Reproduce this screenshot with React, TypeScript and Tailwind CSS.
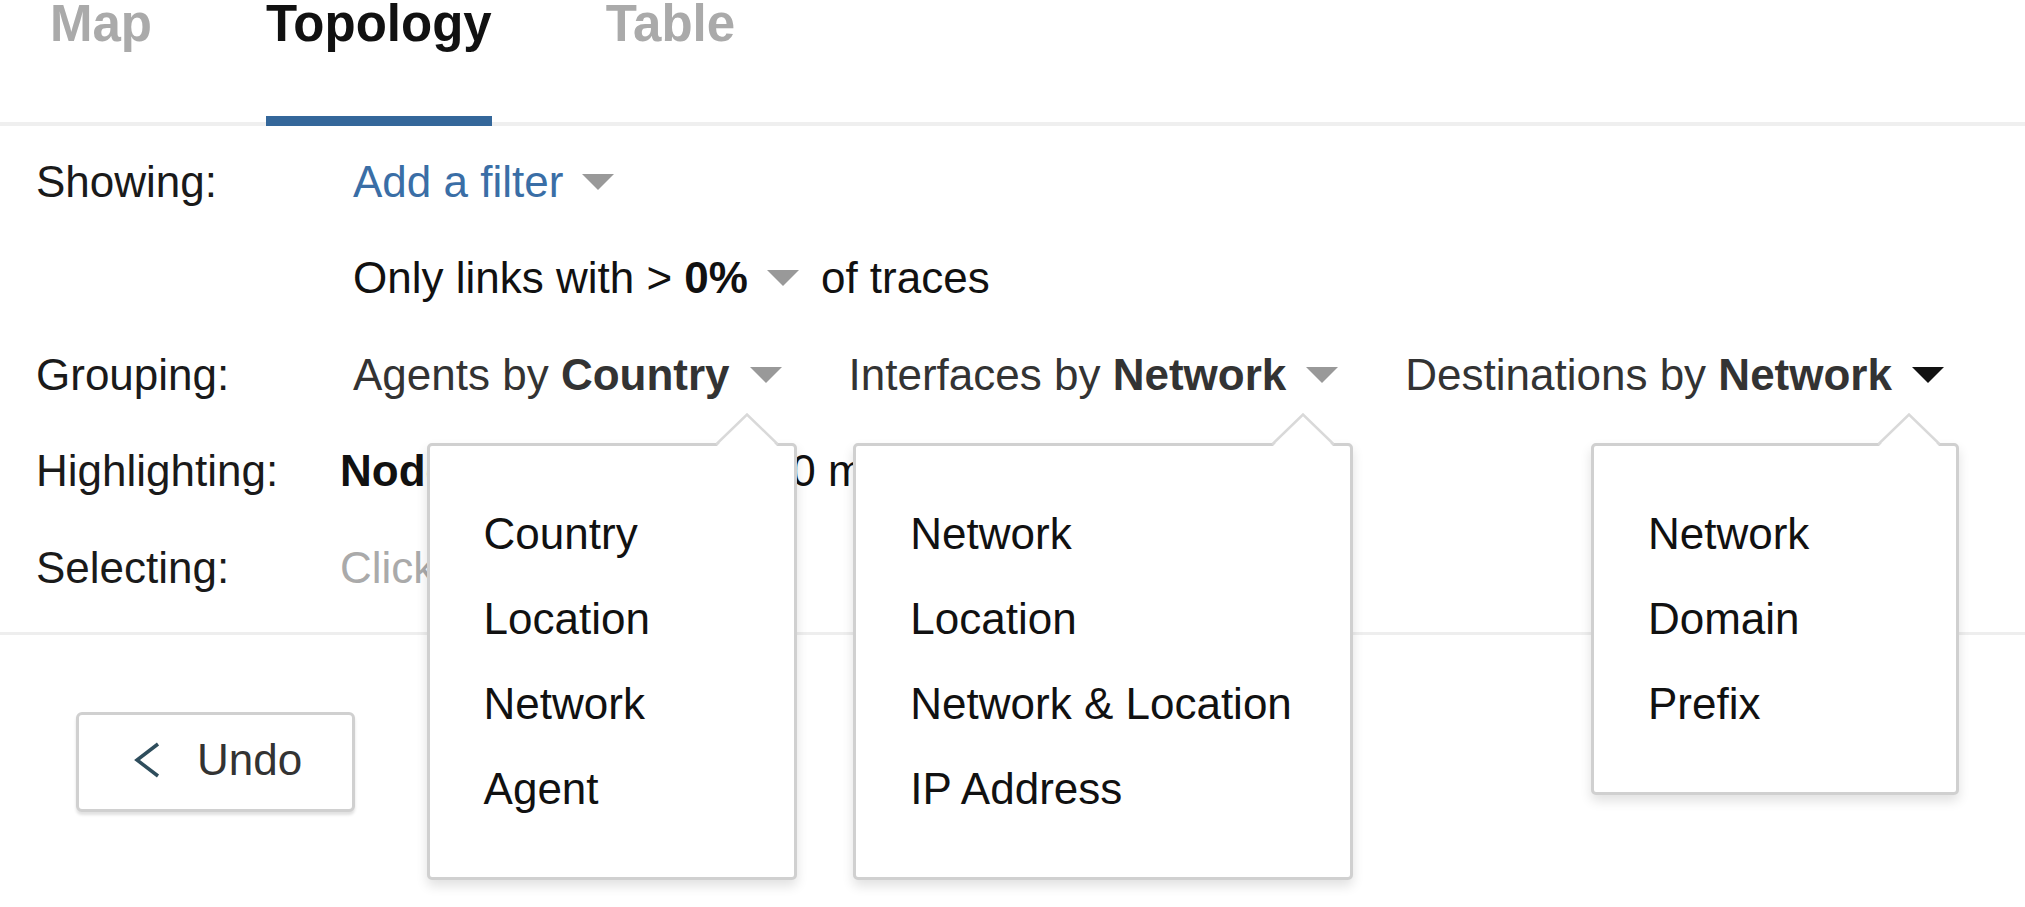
import React from "react";

const Caret = ({ color = "#999999", ml = "ml-[20px]" }: { color?: string; ml?: string }) => (
  <svg
    width="32"
    height="16"
    viewBox="0 0 32 16"
    className={`inline-block align-[7px] ${ml}`}
  >
    <polygon points="0,0 32,0 16,16" fill={color} />
  </svg>
);

const Dropdown = ({ items, width }: { items: string[]; width: string }) => (
  <div
    className={`absolute top-[116.5px] right-[-15px] z-10 ${width} bg-white border-[3px] border-[#d0d0d0] rounded-[5px] shadow-[0_6px_12px_rgba(0,0,0,0.12)] pl-[54px] pt-[45px] pb-[46px] leading-[85px] text-[#111111] font-normal`}
  >
    <svg
      className="absolute top-[-33px] right-[16px]"
      width="62"
      height="34"
      viewBox="0 0 62 34"
    >
      <polygon points="0,34 31,1 62,34" fill="#ffffff" />
      <polyline
        points="0,31.5 31,1.5 62,31.5"
        fill="none"
        stroke="#d9d9d9"
        strokeWidth="2.5"
      />
    </svg>
    {items.map((i) => (
      <div key={i} className="whitespace-nowrap">
        {i}
      </div>
    ))}
  </div>
);

export default function App() {
  return (
    <div className="min-h-[907px] w-[2025px] bg-white font-['Liberation_Sans',Arial,sans-serif] text-[44px] text-[#1a1a1a] overflow-hidden">
      {/* Tabs */}
      <div className="flex gap-[114px] pl-[50px] h-[126px] border-b-4 border-[#efefef]">
        <div className="flex flex-col justify-between h-[126px]">
          <span className="text-[51px] leading-[48px] font-bold text-[#aaaaaa]">Map</span>
        </div>
        <div className="flex flex-col justify-between h-[126px]">
          <span className="text-[51px] leading-[48px] font-bold text-[#111111]">Topology</span>
          <div className="h-[10px] bg-[#34679a]" />
        </div>
        <div className="flex flex-col justify-between h-[126px]">
          <span className="text-[51px] leading-[48px] font-bold text-[#aaaaaa]">Table</span>
        </div>
      </div>

      {/* Filter rows */}
      <div className="pt-[7.5px] leading-[96.5px] whitespace-nowrap">
        <div className="flex">
          <div className="w-[340px] shrink-0 pl-[36px]">Showing:</div>
          <div className="pl-[13px]">
            <span className="text-[#3a6ea6]">Add a filter</span>
            <Caret ml="ml-[19px]" />
          </div>
        </div>

        <div className="flex">
          <div className="w-[340px] shrink-0 pl-[36px]" />
          <div className="pl-[13px] text-[#111111]">
            Only links with &gt; <span className="font-bold">0%</span>
            <Caret ml="ml-[19px]" />
            <span className="ml-[22px]">of traces</span>
          </div>
        </div>

        <div className="flex">
          <div className="w-[340px] shrink-0 pl-[36px]">Grouping:</div>
          <div className="pl-[13px] text-[#333333]">
            <div className="relative inline-block">
              Agents by <span className="font-bold">Country</span>
              <Caret />
              <Dropdown
                width="w-[370px]"
                items={["Country", "Location", "Network", "Agent"]}
              />
            </div>
            <div className="relative inline-block ml-[67px]">
              Interfaces by <span className="font-bold">Network</span>
              <Caret />
              <Dropdown
                width="w-[500px]"
                items={["Network", "Location", "Network & Location", "IP Address"]}
              />
            </div>
            <div className="relative inline-block ml-[67px]">
              Destinations by <span className="font-bold">Network</span>
              <Caret color="#111111" />
              <Dropdown width="w-[368px]" items={["Network", "Domain", "Prefix"]} />
            </div>
          </div>
        </div>

        <div className="flex">
          <div className="w-[340px] shrink-0 pl-[36px]">Highlighting:</div>
          <div className="text-[#111111]">
            <span className="font-bold">Nodes</span> with latency &gt; 10 ms
          </div>
        </div>

        <div className="flex">
          <div className="w-[340px] shrink-0 pl-[36px]">Selecting:</div>
          <div className="text-[#aaaaaa]">Click a node to select</div>
        </div>
      </div>

      <div className="mt-[16px] h-[3px] bg-[#eeeeee]" />

      {/* Undo */}
      <div className="mt-[77px] ml-[76px]">
        <button className="flex items-center h-[100px] w-[279px] pl-[54px] pb-[4px] border-[3px] border-[#d0d0d0] rounded-[6px] bg-white shadow-[0_3px_3px_rgba(0,0,0,0.12)] text-[#333333]">
          <svg width="28" height="40" viewBox="0 0 28 40">
            <polyline
              points="25,4 4,20 25,36"
              fill="none"
              stroke="#2e4d5c"
              strokeWidth="3.5"
            />
          </svg>
          <span className="ml-[36px] leading-[50px]">Undo</span>
        </button>
      </div>
    </div>
  );
}
